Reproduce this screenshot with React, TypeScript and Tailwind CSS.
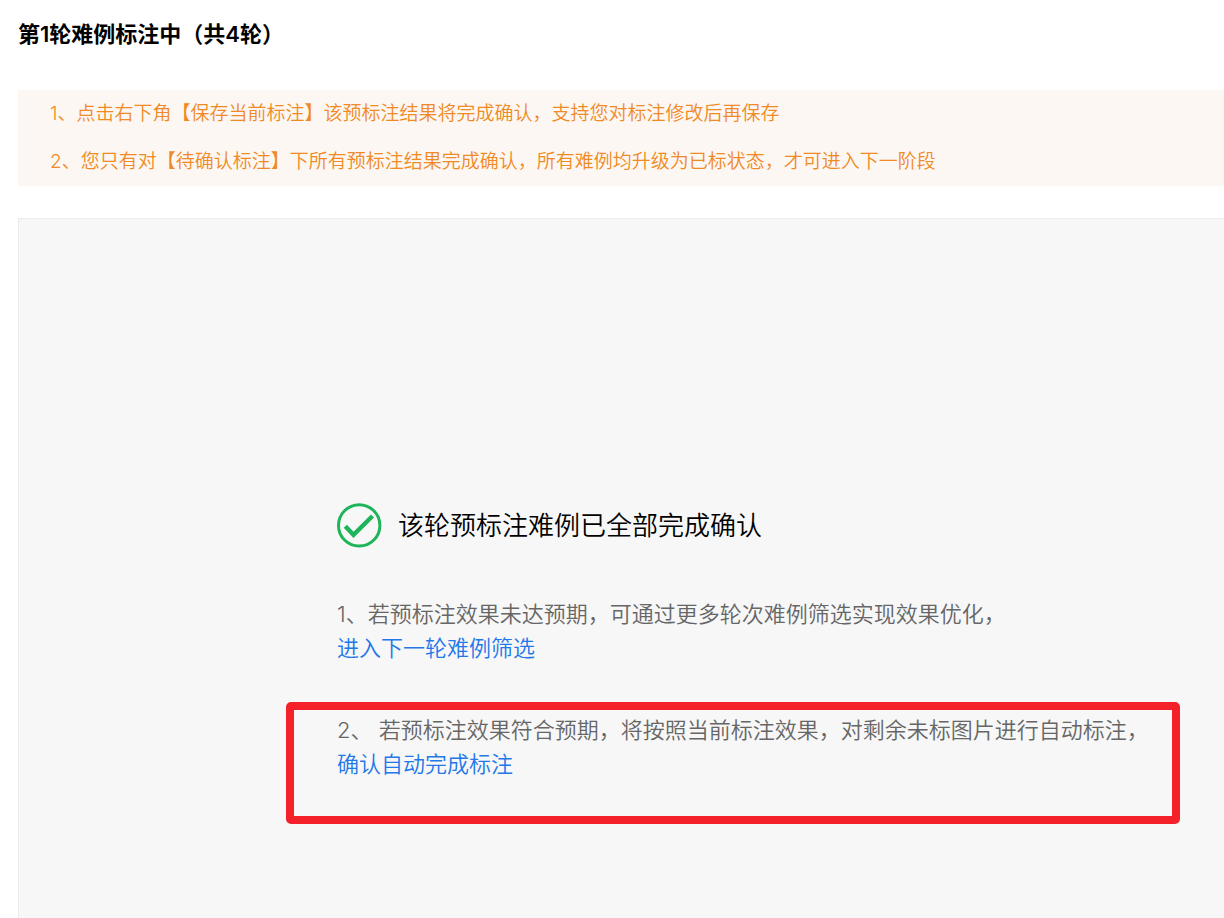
import React from 'react';

const round = {
    current: 1,
    total: 4,
}

const tips = [
    '1、点击右下角【保存当前标注】该预标注结果将完成确认，支持您对标注修改后再保存',
    '2、您只有对【待确认标注】下所有预标注结果完成确认，所有难例均升级为已标状态，才可进入下一阶段',
]

type TOption = {
    text: string,
    action: string,
    href: string,
}

const nextRound: TOption = {
    text: '1、若预标注效果未达预期，可通过更多轮次难例筛选实现效果优化，',
    action: '进入下一轮难例筛选',
    href: '#next-round',
}

const autoLabel: TOption = {
    text: '2、 若预标注效果符合预期，将按照当前标注效果，对剩余未标图片进行自动标注，',
    action: '确认自动完成标注',
    href: '#auto-label',
}

const DoneIcon = () => (
    <svg className="shrink-0" width="45" height="45" viewBox="0 0 45 45" fill="none" stroke="#1eb45a" aria-hidden="true">
        <circle cx="22.2" cy="22.4" r="20.7" strokeWidth="3" />
        <path d="M8.3 23.2L16.5 31.8L35.5 13" strokeWidth="4.4" />
    </svg>
);

const Option = ({ text, action, href }: TOption) => (
    <div className="text-[22px] leading-[34px] text-[#666666]">
        <p>{text}</p>
        <a className="text-[#2277e9] hover:underline" href={href}>{action}</a>
    </div>
);

const App = () => {
    return (
        <div lang="zh-CN" className="flex min-h-screen flex-col bg-white pl-[18px] font-[350] font-[Inter,'Noto_Sans_CJK_SC',sans-serif]">
            <h1 className="pt-4 text-[22px] leading-9 font-semibold text-black">
                第{round.current}轮难例标注中（共{round.total}轮）
            </h1>

            {/* tips */}
            <ul className="mt-[38px] bg-[#fdf7f3] pl-8 text-[19px] leading-[48px] text-[#f08a24]">
                {tips.map((tip) => <li key={tip}>{tip}</li>)}
            </ul>

            {/* result of this round */}
            <main className="mt-8 flex-1 border-t border-l border-[#ebebeb] bg-[#f7f7f7] pt-[284px] pr-11 pb-16 pl-[267px]">
                <div className="flex items-center gap-4 pl-[51px]">
                    <DoneIcon />
                    <h2 className="text-[26px] leading-9 font-[350] text-black">该轮预标注难例已全部完成确认</h2>
                </div>
                <div className="mt-[49px] pl-[51px]">
                    <Option {...nextRound} />
                </div>
                <div className="mt-[37px] rounded-[5px] border-8 border-[#f4212b] pt-[3px] pb-[35px] pl-[43px]">
                    <Option {...autoLabel} />
                </div>
            </main>
        </div>
    );
};

export default App;
